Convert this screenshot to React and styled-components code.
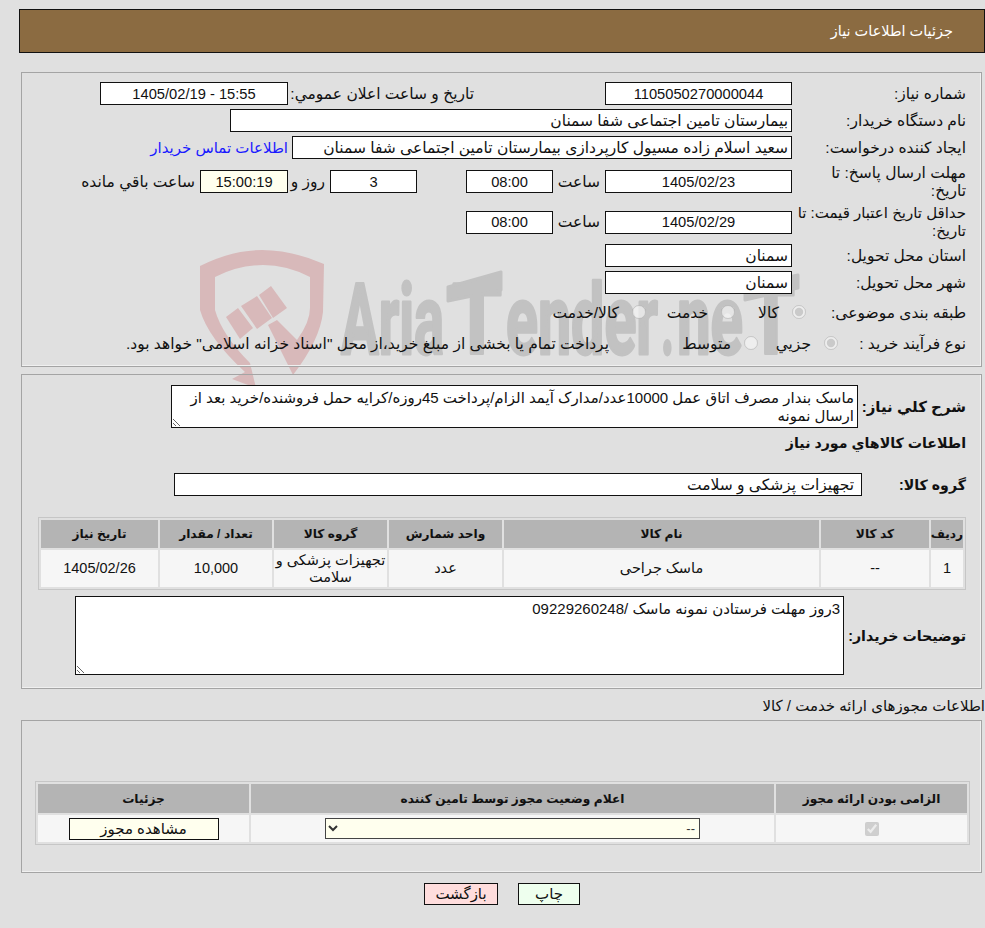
import React from 'react';
import styled, { createGlobalStyle } from 'styled-components';

const STACK = '"Liberation Sans", "DejaVu Sans", sans-serif';

const Global = createGlobalStyle`
  html, body {
    margin: 0;
    padding: 0;
    background: #e0e0e0;
  }
  body {
    font-family: "Liberation Sans", "DejaVu Sans", sans-serif;
    font-size: 15.5px;
    color: #111;
  }
`;

const Page = styled.div`
  position: relative;
  width: 985px;
  height: 928px;
  overflow: hidden;
`;

const Watermark = styled.svg`
  position: absolute;
  left: 0;
  top: 0;
  z-index: 0;
  direction: ltr;
  pointer-events: none;
`;

const Content = styled.div`
  position: relative;
  z-index: 1;
  display: flex;
  flex-direction: column;
  padding-top: 9px;
`;

const Header = styled.div`
  height: 42px;
  margin-left: 19px;
  margin-bottom: 19px;
  padding-right: 31px;
  display: flex;
  align-items: center;
  background: #8b6b41;
  border: 1px solid #111;
  color: #fff;
  font-size: 14.5px;
`;

const Panel = styled.div`
  margin: ${({ $mt }) => $mt || 0}px 3px 0 21px;
  padding: ${({ $pt }) => $pt}px 15px 0 0;
  border: 1px solid #a4a4a4;
  box-shadow: inset -1px -1px 0 #f0f0f0;
  height: ${({ $h }) => $h}px;
  box-sizing: border-box;
`;

const Rows = styled.div`
  display: flex;
  flex-direction: column;
  gap: 4px;
`;

const Row = styled.div`
  display: flex;
  align-items: center;
  height: ${({ $h }) => $h || 23}px;
  margin-top: ${({ $mt }) => $mt || 0}px;
`;

const Label = styled.div`
  width: ${({ $w }) => $w || 174}px;
  flex: none;
  line-height: 18px;
  font-weight: ${({ $bold }) => ($bold ? 700 : 400)};
  font-size: ${({ $size }) => $size || 15.5}px;
`;

const Field = styled.div`
  width: ${({ $w }) => $w}px;
  height: 23px;
  flex: none;
  box-sizing: border-box;
  display: flex;
  align-items: center;
  justify-content: ${({ $center }) => ($center ? 'center' : 'flex-start')};
  padding: 0 ${({ $pad }) => $pad || 3}px;
  background: ${({ $bg }) => $bg || '#fff'};
  border: 1px solid #111;
  font-size: ${({ $num }) => ($num ? 14.7 : 15.5)}px;
  white-space: nowrap;
  overflow: hidden;
`;

const Unit = styled.div`
  width: ${({ $w }) => ($w ? `${$w}px` : 'auto')};
  flex: none;
  box-sizing: border-box;
  padding-right: ${({ $pr }) => $pr || 5}px;
  white-space: nowrap;
`;

const Gap = styled.div`
  width: ${({ $w }) => $w}px;
  flex: none;
`;

const ContactLink = styled.a`
  margin-right: 4px;
  color: #1a1aff;
  text-decoration: none;
  white-space: nowrap;
  font-size: 15px;
`;

const Choice = styled.label`
  width: ${({ $w }) => $w}px;
  flex: none;
  display: flex;
  align-items: center;
  gap: 13px;
  white-space: nowrap;
`;

const Radio = styled.input.attrs({ type: 'radio', disabled: true })`
  width: 14px;
  height: 14px;
  margin: 0;
  flex: none;
  position: relative;
  top: -1px;
`;

const NoteArea = styled.textarea`
  display: block;
  width: ${({ $w }) => $w}px;
  height: ${({ $h }) => $h}px;
  flex: none;
  box-sizing: border-box;
  margin: 0;
  padding: 3px 3px 0;
  border: 1px solid #111;
  border-radius: 0;
  outline: none;
  background: #fff;
  color: #111;
  font: 15px/18px ${STACK};
  resize: both;
`;

const SectionTitle = styled.div`
  margin-top: 5px;
  height: 20px;
  line-height: 20px;
  font-weight: 700;
  font-size: 14.2px;
`;

const Grid = styled.table`
  width: ${({ $w }) => $w}px;
  table-layout: fixed;
  border-collapse: separate;
  border-spacing: 2px;
  border: 1px solid #c6c6c6;
  margin-top: ${({ $mt }) => $mt}px;
  margin-right: ${({ $mr }) => $mr || 0}px;
  font-size: 14.5px;
`;

const Th = styled.th`
  height: ${({ $h }) => $h}px;
  padding: 0;
  background: #b4b4b4;
  font-size: 12.2px;
  font-weight: 700;
  text-align: center;
`;

const Td = styled.td`
  height: ${({ $h }) => $h}px;
  padding: 0;
  background: #f6f6f6;
  text-align: center;
  line-height: 17px;
`;

const PermitTitle = styled.div`
  margin-top: 7px;
  height: 24px;
  line-height: 20px;
  font-size: 15px;
`;

const StatusSelect = styled.select`
  display: block;
  width: 375px;
  height: 21px;
  margin: 0 auto;
  box-sizing: border-box;
  background: #ffffee;
  border: 1px solid #444;
  border-radius: 0;
  font: 13px ${STACK};
  color: #333;
`;

const SmallButton = styled.button`
  display: block;
  width: 150px;
  height: 22px;
  margin: 0 auto;
  padding: 0;
  background: #ffffee;
  border: 1px solid #111;
  font: 15px ${STACK};
  color: #111;
`;

const Actions = styled.div`
  margin: 10px 0 0 19px;
  display: flex;
  justify-content: center;
  gap: 20px;
`;

const ActionButton = styled.button`
  width: ${({ $w }) => $w}px;
  height: 22px;
  padding: 0;
  background: ${({ $bg }) => $bg};
  border: 1px solid #111;
  font: 15px ${STACK};
  color: #111;
`;

const Check = styled.input.attrs({ type: 'checkbox', disabled: true, defaultChecked: true })`
  width: 14px;
  height: 14px;
  margin: 0;
  vertical-align: middle;
`;

const goodsColumns = [
  { title: 'ردیف', w: 32 },
  { title: 'کد کالا', w: 108 },
  { title: 'نام کالا', w: 315 },
  { title: 'واحد شمارش', w: 113 },
  { title: 'گروه کالا', w: 113 },
  { title: 'تعداد / مقدار', w: 112 },
  { title: 'تاریخ نیاز', w: 117 },
];

const goodsRow = ['1', '--', 'ماسک جراحی', 'عدد', 'تجهیزات پزشکی و سلامت', '10,000', '1405/02/26'];

const wordmark = [
  { text: 'Aria', x: 341, w: 103 },
  { text: 'T', x: 452, w: 50 },
  { text: 'ender', x: 506, w: 152 },
  { text: '.', x: 661, w: 13 },
  { text: 'ne', x: 677, w: 66 },
  { text: 'T', x: 747, w: 48 },
];

function Logo() {
  return (
    <Watermark width="985" height="928" viewBox="0 0 985 928">
      <g fill="#d8b9ba">
        <path d="M200 266 Q232 250 262 250 Q292 250 324 264 L323 312 Q320 340 293 375 L268 325 L277 320 L297 340 Q310 322 310 308 L310 277 Q287 265 263 265 Q238 265 215 277 L215 310 Q222 335 250 363 L256 388 L232 379 L245 372 Q208 338 200 310 Z" />
        <path d="M226 317 L238 308 L253 328 L240 339 Z" />
        <path d="M241 306 L257 296 L272 318 L257 329 Z" />
        <path d="M259 295 L271 286 L287 308 L273 318 Z" />
      </g>
      <g fill="#c2c2c2" stroke="#c2c2c2" strokeWidth="3" strokeLinejoin="round" fontFamily="Roboto" fontWeight="700" fontSize="98">
        {wordmark.map((part) => (
          <text key={part.x} x={part.x} y="354" textLength={part.w} lengthAdjust="spacingAndGlyphs">{part.text}</text>
        ))}
        <path d="M448 287 L501 272 L501 290 L448 301 Z" />
        <path d="M745 286 L798 275 L798 288 L745 300 Z" />
      </g>
    </Watermark>
  );
}

function App() {
  return (
    <Page dir="rtl">
      <Global />
      <Logo />
      <Content>
        <Header>جزئیات اطلاعات نیاز</Header>

        <Panel $pt={9} $h={295}>
          <Rows>
            <Row>
              <Label>شماره نیاز:</Label>
              <Field $w={187} $center $num>1105050270000044</Field>
              <Unit $w={317} $pr={131}>تاریخ و ساعت اعلان عمومي:</Unit>
              <Field $w={188} $center $num>15:55 - 1405/02/19</Field>
            </Row>
            <Row>
              <Label>نام دستگاه خریدار:</Label>
              <Field $w={562}>بیمارستان تامین اجتماعی شفا سمنان</Field>
            </Row>
            <Row>
              <Label>ایجاد کننده درخواست:</Label>
              <Field $w={500}>سعید اسلام زاده مسیول کارپردازی بیمارستان تامین اجتماعی شفا سمنان</Field>
              <ContactLink href="#">اطلاعات تماس خریدار</ContactLink>
            </Row>
            <Row $h={37}>
              <Label>مهلت ارسال پاسخ: تا تاریخ:</Label>
              <Field $w={187} $center $num>1405/02/23</Field>
              <Unit $w={52}>ساعت</Unit>
              <Field $w={87} $center $num>08:00</Field>
              <Gap $w={49} />
              <Field $w={87} $center $num>3</Field>
              <Unit $w={42}>روز و</Unit>
              <Field $w={88} $center $num $bg="#ffffee">15:00:19</Field>
              <Unit>ساعت باقي مانده</Unit>
            </Row>
            <Row $h={36}>
              <Label $size={15}>حداقل تاریخ اعتبار قیمت: تا تاریخ:</Label>
              <Field $w={187} $center $num>1405/02/29</Field>
              <Unit $w={52}>ساعت</Unit>
              <Field $w={87} $center $num>08:00</Field>
            </Row>
            <Row>
              <Label>استان محل تحویل:</Label>
              <Field $w={187}>سمنان</Field>
            </Row>
            <Row>
              <Label>شهر محل تحویل:</Label>
              <Field $w={187}>سمنان</Field>
            </Row>
            <Row $h={30}>
              <Label $w={160}>طبقه بندی موضوعی:</Label>
              <Choice $w={71}><Radio name="kind" defaultChecked />کالا</Choice>
              <Choice $w={89}><Radio name="kind" />خدمت</Choice>
              <Choice $w={100}><Radio name="kind" />کالا/خدمت</Choice>
            </Row>
            <Row>
              <Label $w={128}>نوع فرآیند خرید :</Label>
              <Choice $w={80}><Radio name="process" defaultChecked />جزيي</Choice>
              <Choice $w={148}><Radio name="process" />متوسط</Choice>
              <Unit $pr={1}>پرداخت تمام یا بخشی از مبلغ خرید،از محل "اسناد خزانه اسلامی" خواهد بود.</Unit>
            </Row>
          </Rows>
        </Panel>

        <Panel $mt={7} $pt={10} $h={315}>
          <Row $h={43}>
            <Label $w={108} $bold $size={15}>شرح کلي نیاز:</Label>
            <NoteArea
              $w={687}
              $h={43}
              readOnly
              defaultValue={'ماسک بندار مصرف اتاق عمل 10000عدد/مدارک آیمد الزام/پرداخت 45روزه/کرایه حمل فروشنده/خرید بعد از\nارسال نمونه'}
            />
          </Row>
          <SectionTitle>اطلاعات کالاهاي مورد نیاز</SectionTitle>
          <Row $mt={20}>
            <Label $w={104} $bold $size={14.2}>گروه کالا:</Label>
            <Field $w={688} $pad={7}>تجهیزات پزشکی و سلامت</Field>
          </Row>
          <Grid $w={928} $mt={21}>
            <colgroup>
              {goodsColumns.map((col) => <col key={col.title} style={{ width: col.w }} />)}
            </colgroup>
            <thead>
              <tr>
                {goodsColumns.map((col) => <Th key={col.title} $h={28}>{col.title}</Th>)}
              </tr>
            </thead>
            <tbody>
              <tr>
                {goodsRow.map((cell, i) => <Td key={i} $h={37}>{cell}</Td>)}
              </tr>
            </tbody>
          </Grid>
          <Row $h={79} $mt={6}>
            <Label $w={122} $bold $size={14.2}>توضیحات خریدار:</Label>
            <NoteArea $w={769} $h={79} readOnly defaultValue="3روز مهلت فرستادن نمونه ماسک /09229260248" />
          </Row>
        </Panel>

        <PermitTitle>اطلاعات مجوزهای ارائه خدمت / کالا</PermitTitle>

        <Panel $pt={60} $h={153}>
          <Grid $w={935} $mt={0} $mr={-4}>
            <colgroup>
              <col style={{ width: 191 }} />
              <col style={{ width: 523 }} />
              <col style={{ width: 211 }} />
            </colgroup>
            <thead>
              <tr>
                <Th $h={29}>الزامی بودن ارائه مجوز</Th>
                <Th $h={29}>اعلام وضعیت مجوز توسط تامین کننده</Th>
                <Th $h={29}>جزئیات</Th>
              </tr>
            </thead>
            <tbody>
              <tr>
                <Td $h={27}><Check /></Td>
                <Td $h={27}>
                  <StatusSelect defaultValue="none">
                    <option value="none">--</option>
                  </StatusSelect>
                </Td>
                <Td $h={27}><SmallButton type="button">مشاهده مجوز</SmallButton></Td>
              </tr>
            </tbody>
          </Grid>
        </Panel>

        <Actions>
          <ActionButton type="button" $w={62} $bg="#eeffee">چاپ</ActionButton>
          <ActionButton type="button" $w={74} $bg="#ffdddd">بازگشت</ActionButton>
        </Actions>
      </Content>
    </Page>
  );
}

export default App;
